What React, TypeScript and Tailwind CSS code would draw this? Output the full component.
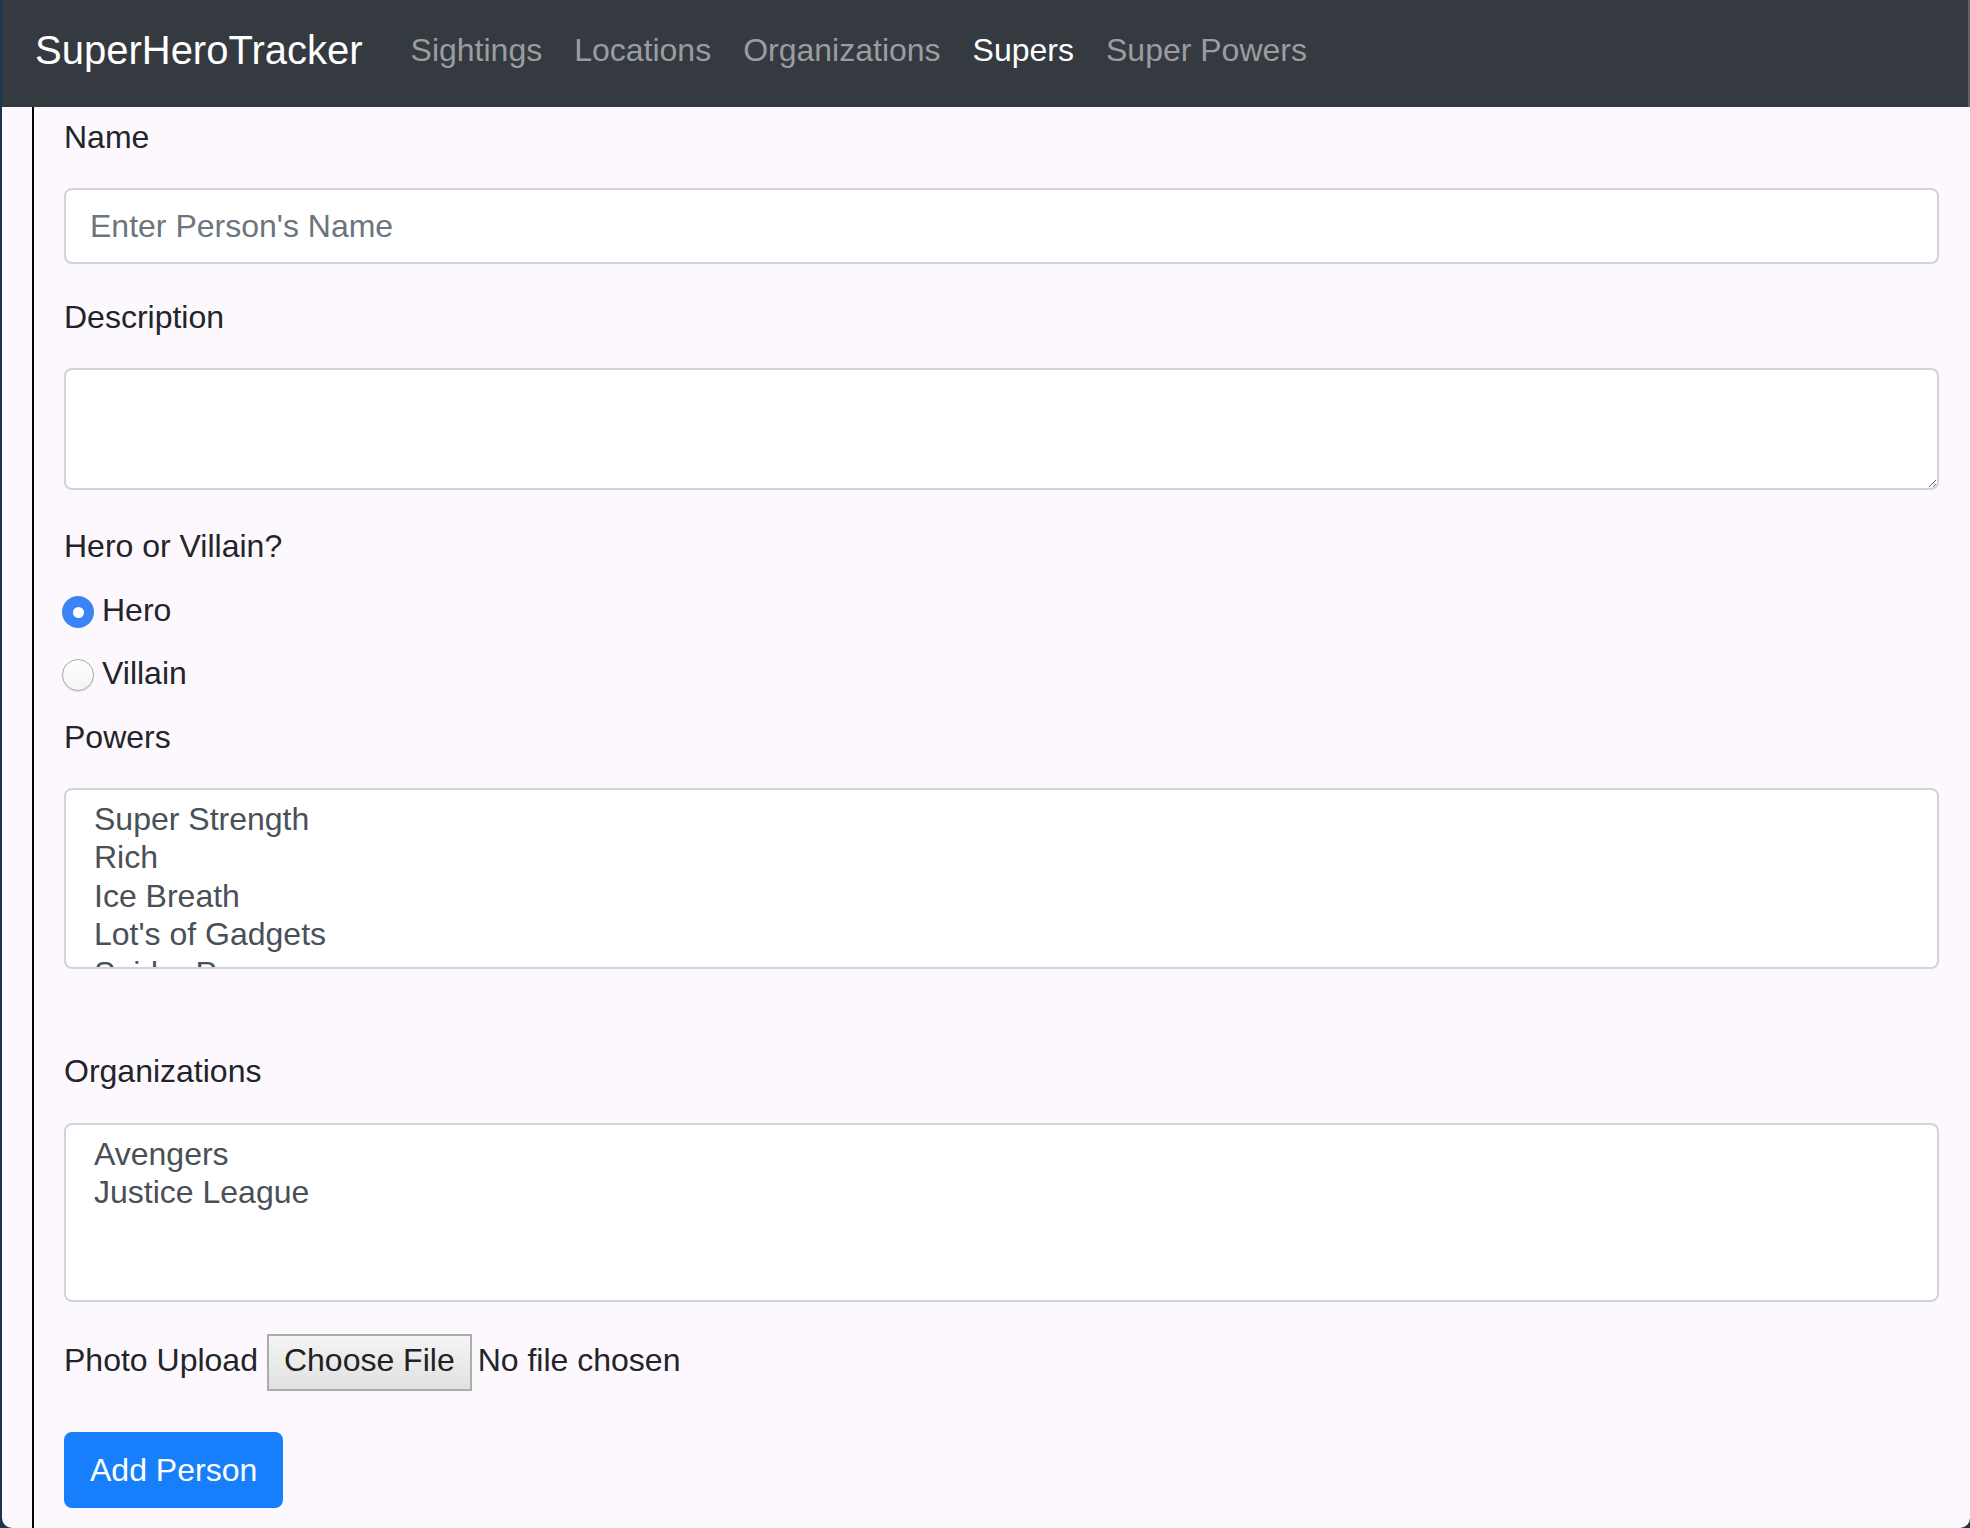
import React from "react";

const navLinks = [
  { label: "Sightings", active: false },
  { label: "Locations", active: false },
  { label: "Organizations", active: false },
  { label: "Supers", active: true },
  { label: "Super Powers", active: false },
];

const powers = [
  "Super Strength",
  "Rich",
  "Ice Breath",
  "Lot's of Gadgets",
  "Spider Powers",
  "Flight",
];

const organizations = ["Avengers", "Justice League"];

function ListBox({ items, height }: { items: string[]; height: string }) {
  return (
    <div
      className={`${height} w-full overflow-hidden rounded-[8px] border-2 border-[#ced4da] bg-white pl-[28px] pt-[10px] text-[32px] leading-[38.4px] text-[#495057]`}
    >
      {items.map((item) => (
        <div key={item} className="whitespace-nowrap">
          {item}
        </div>
      ))}
    </div>
  );
}

function Radio({ checked, label }: { checked: boolean; label: string }) {
  return (
    <div className="flex h-[48px] items-start">
      {checked ? (
        <div className="ml-[-2px] mt-[10px] flex h-[32px] w-[32px] items-center justify-center rounded-full bg-[#3b84f6]">
          <div className="h-[11px] w-[11px] rounded-full bg-white" />
        </div>
      ) : (
        <div className="ml-[-2px] mt-[10px] h-[32px] w-[32px] rounded-full border-[1.5px] border-[#aaaaaa] bg-linear-to-b from-[#ffffff] to-[#f4f4f4] shadow-[0_1px_1px_rgba(0,0,0,0.12)]" />
      )}
      <span className="ml-[8px] leading-[48px]">{label}</span>
    </div>
  );
}

export default function App() {
  return (
    <div className="flex h-[1528px] w-[1970px] overflow-hidden bg-[#17384f] font-['Liberation_Sans',Arial,sans-serif]">
      <div className="ml-[2px] flex h-[1528px] flex-1 flex-col overflow-hidden rounded-b-[10px] bg-[#fdf8fe]">
        {/* navbar */}
        <nav className="flex h-[107px] shrink-0 items-center border-r-2 border-[#60666b] bg-[#343a40] pb-[7px] pl-[33px]">
          <span className="mr-[32px] text-[40px] leading-none text-white">SuperHeroTracker</span>
          {navLinks.map((link) => (
            <span
              key={link.label}
              className={`px-[16px] text-[32px] leading-none ${link.active ? "text-white" : "text-[#9a9da0]"}`}
            >
              {link.label}
            </span>
          ))}
        </nav>

        {/* form */}
        <div className="ml-[30px] flex flex-1 flex-col border-l-2 border-black pl-[30px] pr-[31px] pt-[6px] text-[32px] text-[#212529]">
          <label className="block leading-[48px]">Name</label>
          <input
            type="text"
            placeholder="Enter Person's Name"
            className="mt-[27px] h-[76px] w-full rounded-[8px] border-2 border-[#ced4da] bg-white px-[24px] text-[32px] text-[#495057] outline-none placeholder:text-[#6c757d]"
          />

          <label className="mt-[29px] block leading-[48px]">Description</label>
          <textarea className="mt-[27px] h-[122px] w-full rounded-[8px] border-2 border-[#ced4da] bg-white px-[24px] py-[12px] text-[32px] outline-none" />

          <label className="mt-[32px] block leading-[48px]">Hero or Villain?</label>
          <div className="mt-[16px]">
            <Radio checked label="Hero" />
          </div>
          <div className="mt-[15px]">
            <Radio checked={false} label="Villain" />
          </div>

          <label className="mt-[16px] block leading-[48px]">Powers</label>
          <div className="mt-[27px]">
            <ListBox items={powers} height="h-[181px]" />
          </div>

          <label className="mt-[78px] block leading-[48px]">Organizations</label>
          <div className="mt-[28px]">
            <ListBox items={organizations} height="h-[179px]" />
          </div>

          <div className="mt-[32px] flex items-baseline">
            <span className="leading-[48px]">Photo Upload</span>
            <button className="ml-[9px] h-[57px] border-2 border-[#acacac] bg-linear-to-b from-[#f4f4f4] to-[#e1e1e1] px-[15px] pb-[4px] text-[32px] leading-[49px] text-[#222222]">
              Choose File
            </button>
            <span className="ml-[6px] leading-[48px]">No file chosen</span>
          </div>

          <div className="mt-[41px]">
            <button className="h-[76px] rounded-[8px] border-2 border-[#177ffb] bg-[#177ffb] px-[24px] text-[32px] leading-[48px] text-white">
              Add Person
            </button>
          </div>
        </div>
      </div>
    </div>
  );
}
